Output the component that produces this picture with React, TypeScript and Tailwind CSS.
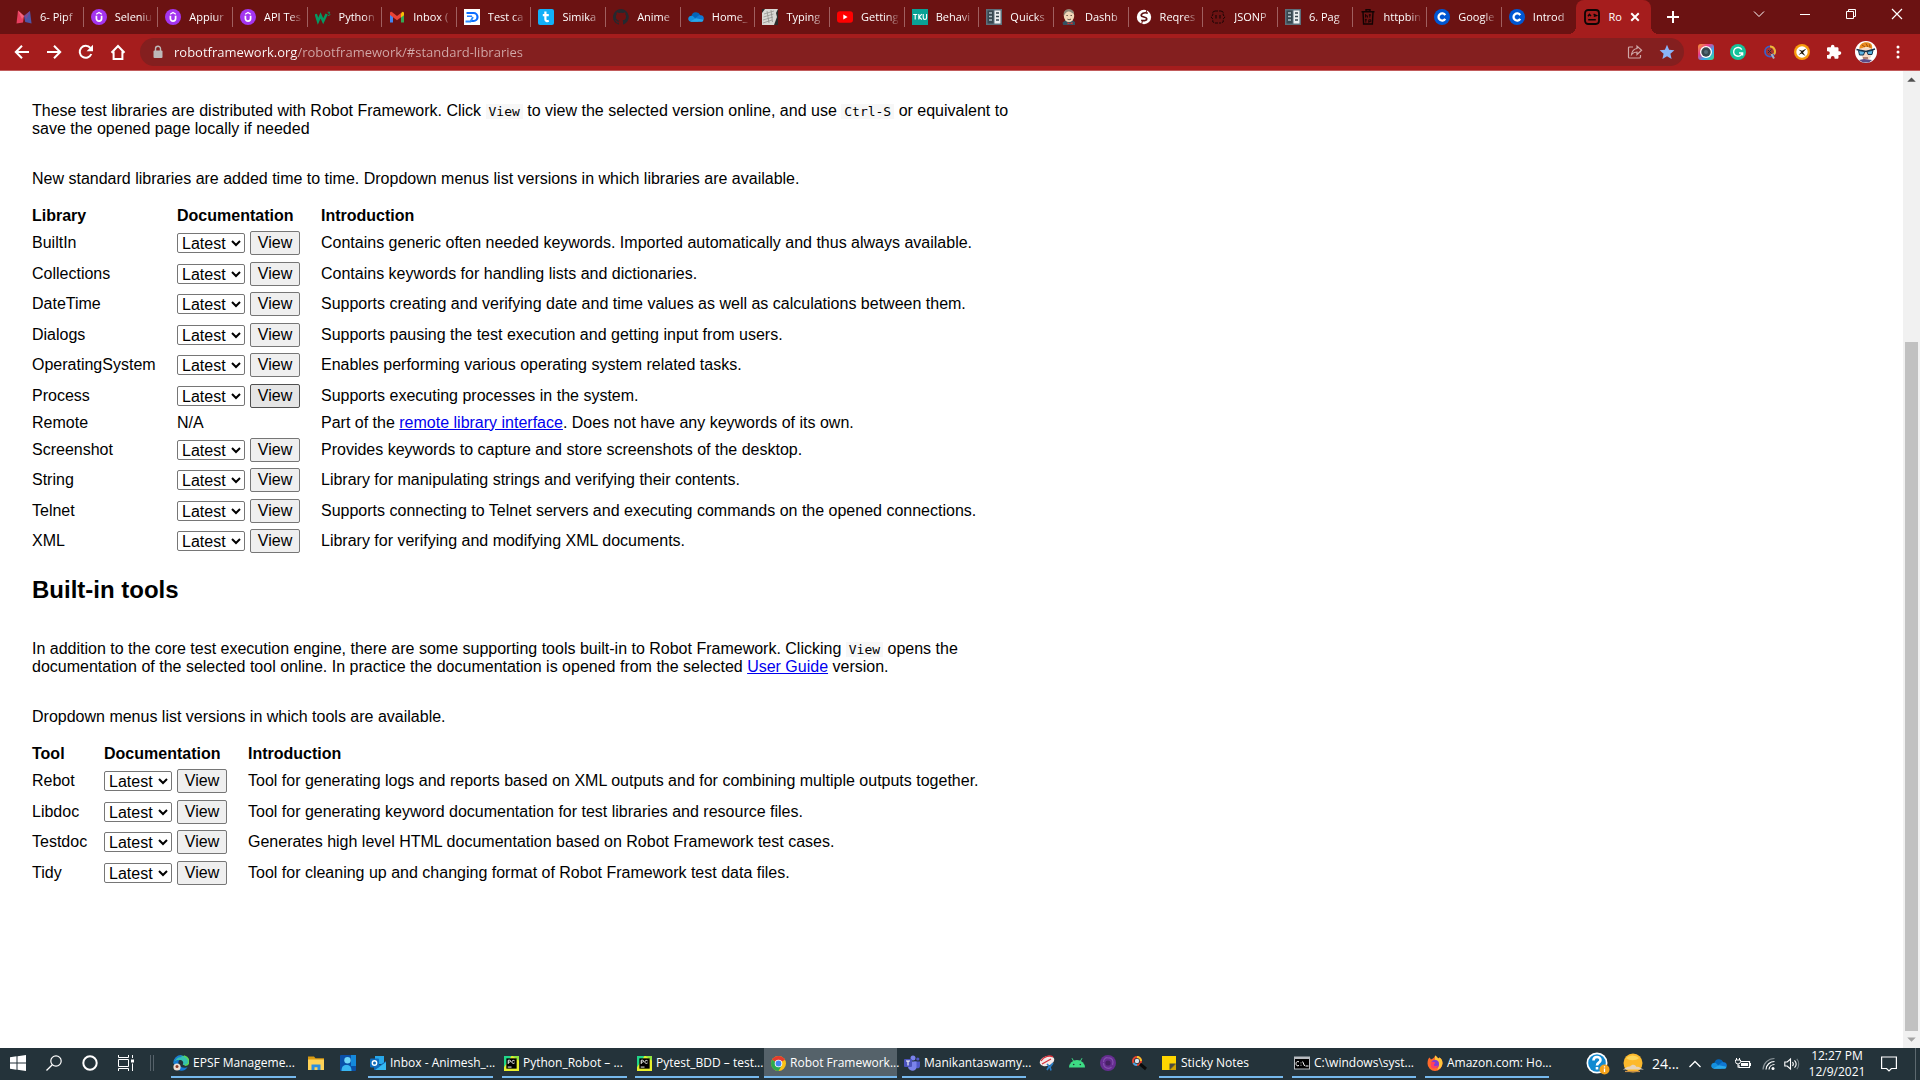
import type { ReactNode } from "react";

type IconProps = { children: ReactNode; className?: string; box?: string };

function Icon({ children, className = "size-4", box = "0 0 16 16" }: IconProps) {
  return (
    <svg viewBox={box} className={`${className} shrink-0`} fill="none" aria-hidden="true">
      {children}
    </svg>
  );
}

/* ---------- Tab icons ---------- */

const udemy = (
  <Icon>
    <circle cx="8" cy="8" r="8" fill="#a435f0" />
    <path d="M5.4 6.8v2.8a2.6 2.6 0 0 0 5.2 0V6.8" stroke="#fff" strokeWidth="1.7" />
    <path d="M5.2 5.2 8 3.4l2.8 1.8" stroke="#fff" strokeWidth="1.3" />
  </Icon>
);

const coursera = (
  <Icon>
    <circle cx="8" cy="8" r="8" fill="#0056d2" />
    <path d="M11.2 6.1A3.6 3.6 0 1 0 11.2 9.9" stroke="#fff" strokeWidth="2.3" />
  </Icon>
);

const bookPages = (
  <Icon>
    <rect width="16" height="16" fill="#5c6f7b" />
    <rect x="1.5" y="1.5" width="6" height="13" fill="#37474f" />
    <rect x="8.5" y="1.5" width="6" height="13" fill="#eceff1" />
    <path d="M3 4h3M3 7.5h3M3 11h3" stroke="#b0bec5" strokeWidth="1.6" />
    <path d="M10 4h3M10 7.5h3M10 11h3" stroke="#37474f" strokeWidth="1.6" />
  </Icon>
);

const cloud = (
  <Icon>
    <path d="M3.5 7a4.6 4.6 0 0 1 8.7-1l-4 4.5L2 11z" fill="#0364b8" />
    <path d="M.2 10.3A3.3 3.3 0 0 1 4.8 7l6 5.8H3a2.9 2.9 0 0 1-2.8-2.5z" fill="#1490df" />
    <path d="M7 9.2 11.3 6a3.9 3.9 0 0 1 1.6.3A3.4 3.4 0 0 1 15.8 10l-1.5 2.7L9 12z" fill="#0f78d4" />
    <path d="M2.2 12.6 8 9.2l7.6 1.6a2.6 2.6 0 0 1-2.3 2H3.4z" fill="#28a8ea" />
  </Icon>
);

const robot = (
  <Icon>
    <rect x="1" y="1" width="14" height="14" rx="3.2" stroke="#0b0505" strokeWidth="1.8" />
    <path d="M4 7.2 5.4 5.4 7 7M9.6 5.2l2.6 1.4-2.4.6M4.2 10.8h7.6" stroke="#0b0505" strokeWidth="1.5" />
  </Icon>
);

const tabs: { title: string; icon: ReactNode }[] = [
  {
    title: "6- Pipf",
    icon: (
      <Icon>
        <path d="M2 1.5 8 7l-1 6.5-6.5 1z" fill="#e83e5f" />
        <path d="M14 2 8 7l1.2 6 6.4 1.5z" fill="#4e55a5" />
        <path d="M2 1.5 8 7l-2 3z" fill="#f7647c" />
        <path d="M8 7 14 2l-3.4 8z" fill="#7a4a93" />
      </Icon>
    ),
  },
  { title: "Seleniu", icon: udemy },
  { title: "Appiur", icon: udemy },
  { title: "API Tes", icon: udemy },
  {
    title: "Python",
    icon: (
      <Icon>
        <path d="M.8 5 3 12.2 5.6 6.4 8.2 12.2 11.6 5" stroke="#059862" strokeWidth="2.5" />
        <path d="M12.6 3.2h2.2l-1 1.4c1.6 0 1.5 2.2-.9 1.9" stroke="#059862" strokeWidth="1" />
      </Icon>
    ),
  },
  {
    title: "Inbox (",
    icon: (
      <Icon>
        <path d="M1 4v9.5h3V7z" fill="#4285f4" />
        <path d="M15 4v9.5h-3V7z" fill="#34a853" />
        <path d="M12 4.2 13.2 3A1.2 1.2 0 0 1 15 4v2.2l-3 2.2z" fill="#fbbc04" />
        <path d="M1 4.2A1.2 1.2 0 0 1 2.9 3L8 7l4-3v4.3l-4 3-7-5.2z" fill="#ea4335" />
      </Icon>
    ),
  },
  {
    title: "Test ca",
    icon: (
      <Icon>
        <rect width="16" height="16" fill="#fff" />
        <path d="M2.5 4h7a4 4 0 0 1 0 8h-3" stroke="#0a6cff" strokeWidth="2.2" />
        <path d="M1.5 12.5h5L9 8" stroke="#2b8cff" strokeWidth="1.8" />
        <path d="M3 7.2h5" stroke="#0a6cff" strokeWidth="1.4" />
      </Icon>
    ),
  },
  {
    title: "Simika",
    icon: (
      <Icon>
        <rect width="16" height="16" rx="2" fill="#12b0f8" />
        <path d="M7.4 2.6v7.6c0 1.8 1.6 2.2 3.4 1.6M4.8 6.2h6" stroke="#fff" strokeWidth="2.2" />
      </Icon>
    ),
  },
  {
    title: "Anime",
    icon: (
      <Icon>
        <path
          fill="#24292f"
          d="M8 0a8 8 0 0 0-2.5 15.6c.4 0 .5-.2.5-.4v-1.5c-2.2.5-2.7-1-2.7-1-.4-.9-.9-1.2-.9-1.2-.7-.5.1-.5.1-.5.8.1 1.2.8 1.2.8.7 1.3 1.9.9 2.3.7.1-.5.3-.9.5-1.1-1.8-.2-3.6-.9-3.6-4 0-.9.3-1.6.8-2.1 0-.2-.4-1 .1-2.1 0 0 .7-.2 2.2.8a7.5 7.5 0 0 1 4 0c1.5-1 2.2-.8 2.2-.8.5 1.1.2 1.9.1 2.1.5.6.8 1.3.8 2.2 0 3-1.8 3.7-3.6 3.9.3.3.5.8.5 1.5v2.2c0 .2.1.5.5.4A8 8 0 0 0 8 0z"
        />
      </Icon>
    ),
  },
  { title: "Home_", icon: cloud },
  {
    title: "Typing",
    icon: (
      <Icon>
        <rect width="16" height="16" fill="#2a2a2a" />
        <path d="M3 0h13l-2 4 1 4-3 8H0V4z" fill="#d9d9d5" />
        <path d="M2 5l10-3M1.5 8l10-3M1 11l10-3M1 14l9-3M5 2l2 12M9 1l1.5 12" stroke="#8b8b87" strokeWidth=".7" />
      </Icon>
    ),
  },
  {
    title: "Getting",
    icon: (
      <Icon>
        <rect y="2.2" width="16" height="11.6" rx="3" fill="#f00" />
        <path d="M6.3 5.6v4.8L10.6 8z" fill="#fff" />
      </Icon>
    ),
  },
  {
    title: "Behavi",
    icon: (
      <Icon>
        <rect width="16" height="16" fill="#0aa195" />
        <path d="M1.2 5.5h4M3.2 5.5v5M6.8 5v5.5M9.8 5.2 7 8l2.8 2.5M11.2 5v3.8c0 2.2 3.4 2.2 3.4 0V5" stroke="#fff" strokeWidth="1.1" />
      </Icon>
    ),
  },
  { title: "Quicks", icon: bookPages },
  {
    title: "Dashb",
    icon: (
      <Icon>
        <path d="M1.5 13.5 5 11h6l3 2v3H2z" fill="#335061" />
        <ellipse cx="8" cy="6.8" rx="5.2" ry="6.3" fill="#f0d6b7" />
        <path d="M2.8 7C2 2 5 .2 8 .3c3 0 5 1.8 5 4.7-2-1-4-3-6.500-2.200C4.500 3.600 4 5 2.800 7z" fill="#8d8678" />
        <path d="M5.500 6.500h1.200M9.600 6.500h1.200M6.500 10.200c1.500.8 2.500.5 3.500-.2" stroke="#33271f" strokeWidth=".9" />
        <path d="M6.500 13.300 9 14.200l2.600-1.200v2.600L9 14.600l-2.500 1z" fill="#d33833" />
      </Icon>
    ),
  },
  {
    title: "Reqres",
    icon: (
      <Icon>
        <circle cx="8" cy="8" r="7.2" fill="#fff" />
        <path d="M11.800 4.200C8 3 4.800 4.600 5.200 6.600c.4 1.700 5.400 1.200 5.600 3.200.1 1.700-2.800 2.400-5.600 1.400" stroke="#5a1212" strokeWidth="1.700" />
        <path d="M11 .8 9.800 4M5.600 15.300 6.400 12" stroke="#6b1212" strokeWidth="1" />
      </Icon>
    ),
  },
  {
    title: "JSONP",
    icon: (
      <Icon>
        <path d="M5 2 2.800 3v3L1 8l1.800 2v3L5 14M11 2l2.200 1v3L15 8l-1.800 2v3L11 14M5 2h6M5 14h6" stroke="#1c0505" strokeWidth="1" strokeDasharray="3 1" />
        <path d="M6 6v3.500M10 6v3.500" stroke="#1c0505" strokeWidth="1.200" />
      </Icon>
    ),
  },
  { title: "6. Pag", icon: bookPages },
  {
    title: "httpbin",
    icon: (
      <Icon>
        <path d="M1.500 2.800h13M6 2.500V.8h4v1.700M3 3l.6 12h8.800L13 3" stroke="#120303" strokeWidth="1.400" />
        <path d="M5.600 5v3.600M5.600 6.800h1.800v1.800M9.800 5v3.600M8.800 6h2.200M5.800 9.800v3.800M4.900 10.800h2M8.800 13.800v-3h2v1.800h-2" stroke="#120303" strokeWidth=".9" />
      </Icon>
    ),
  },
  { title: "Google", icon: coursera },
  { title: "Introd", icon: coursera },
];

function TabStrip() {
  return (
    <header className="flex h-[34px] bg-[#6b1212] text-white">
      <div role="tablist" className="flex min-w-0 flex-1 pl-[9px]">
        {tabs.map((tab, i) => (
          <button
            key={i}
            role="tab"
            aria-selected="false"
            className={`my-[7px] flex min-w-0 flex-1 basis-0 items-center gap-2 pr-1 pl-[7px] text-left ${
              i < tabs.length - 1 ? "border-r border-[#a05f5f]" : "border-r border-transparent"
            }`}
          >
            {tab.icon}
            <span className="min-w-0 flex-1 text-[11px] leading-4 whitespace-nowrap [mask-image:linear-gradient(90deg,black_65%,transparent)]">
              {tab.title}
            </span>
          </button>
        ))}
        <div className="relative flex min-w-0 flex-1 basis-0 items-center rounded-t-lg bg-[#a51d1d] pr-1 pl-2">
          <span className="absolute bottom-0 -left-2 size-2 bg-[radial-gradient(circle_at_0_0,transparent_8px,#a51d1d_8px)]" />
          <span className="absolute -right-2 bottom-0 size-2 bg-[radial-gradient(circle_at_100%_0,transparent_8px,#a51d1d_8px)]" />
          <button role="tab" aria-selected="true" className="flex min-w-0 flex-1 items-center gap-2 text-left">
            {robot}
            <span className="w-4 text-[11px] leading-4 whitespace-nowrap">Ro</span>
          </button>
          <button aria-label="Close tab" className="mr-1.5">
            <Icon className="size-3">
              <path d="m3 3 10 10M13 3 3 13" stroke="#fff" strokeWidth="2.600" />
            </Icon>
          </button>
        </div>
      </div>
      <div className="flex w-[269px] justify-between pr-[15px] pl-[14px]">
        <button aria-label="New tab" className="self-center">
          <Icon>
            <path d="M8 2v12M2 8h12" stroke="#fff" strokeWidth="2" />
          </Icon>
        </button>
        <div className="flex h-7 items-center gap-[30px]">
          <button aria-label="Search tabs">
            <Icon>
              <path d="m3 5.500 5 5 5-5" stroke="#fff" />
            </Icon>
          </button>
          <button aria-label="Minimize">
            <Icon>
              <path d="M3 8.500h10" stroke="#fff" />
            </Icon>
          </button>
          <button aria-label="Restore">
            <Icon>
              <path d="M3.500 5.500h7v7h-7zM5.500 5.500v-2h7v7h-2" stroke="#fff" />
            </Icon>
          </button>
          <button aria-label="Close">
            <Icon>
              <path d="m3 3 10 10M13 3 3 13" stroke="#fff" strokeWidth="1.200" />
            </Icon>
          </button>
        </div>
      </div>
    </header>
  );
}

function Toolbar() {
  return (
    <nav className="flex h-[37px] items-center border-b border-[#c25c5c] bg-[#a51d1d] pr-[14px] pl-[14px]">
      <div className="flex items-center gap-4">
        <button aria-label="Back">
          <Icon>
            <path d="M15 8H2M8 1.800 1.800 8 8 14.200" stroke="#fff" strokeWidth="2" />
          </Icon>
        </button>
        <button aria-label="Forward">
          <Icon>
            <path d="M1 8h13M8 1.800 14.200 8 8 14.200" stroke="#fff" strokeWidth="2" />
          </Icon>
        </button>
        <button aria-label="Reload">
          <Icon>
            <path d="M13.300 10A6 6 0 1 1 12.400 4" stroke="#fff" strokeWidth="2" />
            <path d="M15 .8v6.400H8.600z" fill="#fff" />
          </Icon>
        </button>
        <button aria-label="Home">
          <Icon>
            <path d="M1.500 8.800 8 2l6.500 6.800M3.600 7.500V15h8.800V7.500" stroke="#fff" strokeWidth="2" />
          </Icon>
        </button>
      </div>
      <div className="ml-[14px] flex h-7 flex-1 items-center rounded-full bg-[#841f1f] pr-[9px] pl-2.5">
        <Icon>
          <rect x="3.500" y="6.500" width="9" height="7.500" rx="1" fill="#bdb9b9" />
          <path d="M5.500 7V4.700a2.500 2.500 0 0 1 5 0V7" stroke="#bdb9b9" strokeWidth="1.400" />
        </Icon>
        <input
          aria-label="Address"
          defaultValue="robotframework.org/robotframework/#standard-libraries"
          className="ml-2 min-w-0 flex-1 bg-[linear-gradient(90deg,#ffffff_124px,#d3a9a9_124px)] bg-clip-text text-[13px] leading-5 text-transparent outline-none"
        />
        <button aria-label="Share">
          <Icon>
            <path d="M6 3H2.500A1 1 0 0 0 1.500 4v9a1 1 0 0 0 1 1h10a1 1 0 0 0 1-1v-2" stroke="#cfa6a6" strokeWidth="1.200" />
            <path d="M10 2v2.500C6.500 5 5 7.500 4.600 10.500 6 8.700 7.500 8 10 8v2.500l4.600-4.300z" stroke="#cfa6a6" strokeWidth="1.200" />
          </Icon>
        </button>
        <button aria-label="Bookmark" className="ml-4">
          <Icon>
            <path d="m8 .8 2.100 5 5.300.4-4 3.500 1.200 5.200L8 12.200l-4.600 2.700 1.200-5.200-4-3.500 5.300-.4z" fill="#8ab4f8" />
          </Icon>
        </button>
      </div>
      <div className="ml-[14px] flex items-center gap-4">
        <button aria-label="Camera extension">
          <svg viewBox="0 0 16 16" className="size-4">
            <defs>
              <linearGradient id="cam" x1="0" y1="0" x2="1" y2="1">
                <stop offset="0" stopColor="#f6a02c" />
                <stop offset=".35" stopColor="#ec3b8b" />
                <stop offset=".65" stopColor="#35a7f0" />
                <stop offset="1" stopColor="#3ddc84" />
              </linearGradient>
            </defs>
            <rect width="16" height="16" rx="3" fill="url(#cam)" />
            <circle cx="8" cy="8" r="6" fill="#fff" />
            <circle cx="8" cy="8" r="4.700" fill="#36474f" />
            <circle cx="8" cy="8" r="2" fill="#546b78" />
          </svg>
        </button>
        <button aria-label="Grammar extension">
          <Icon>
            <circle cx="8" cy="8" r="8" fill="#15c39a" />
            <path d="M11.800 5.600A4.400 4.400 0 1 0 12.300 9M9 9h3.600v2.500" stroke="#fff" strokeWidth="1.400" />
          </Icon>
        </button>
        <button aria-label="Search extension">
          <Icon>
            <circle cx="8" cy="7.500" r="4.900" stroke="#3d5fc4" strokeWidth="2" />
            <circle cx="8" cy="7.500" r="3.900" fill="#a8322c" />
            <path d="M8 2.600a4.900 4.900 0 0 1 4 7.800" stroke="#f2b632" strokeWidth="2" />
            <path d="m9.500 10 2.500 4.500" stroke="#9fb2c4" strokeWidth="2" />
            <path d="m6 6 3.500 3.500M9.500 5.500 6 9" stroke="#2b2340" />
          </Icon>
        </button>
        <button aria-label="Picker extension">
          <Icon>
            <circle cx="8" cy="8" r="8" fill="#f79a0c" />
            <circle cx="8" cy="8" r="5.700" fill="#fff" />
            <path d="M4.500 5.500 8 6.800l4.500-2.300L9 8.500l2.500 3.500-4-2.500-3 1.500 2.800-3z" fill="#20180a" />
          </Icon>
        </button>
        <button aria-label="Extensions">
          <Icon>
            <path
              fill="#fff"
              d="M13.500 7.300h-1V4.600c0-.8-.6-1.300-1.300-1.300H8.500v-.8a1.800 1.800 0 0 0-3.600 0v.8H2.300C1.600 3.300 1 3.800 1 4.600v2.600h.9a1.900 1.900 0 0 1 0 3.800H1v2.500c0 .8.6 1.300 1.300 1.300h2.500v-.9a1.900 1.900 0 0 1 3.800 0v.9h2.600c.7 0 1.300-.5 1.300-1.300v-2.600h1a1.800 1.800 0 0 0 0-3.600z"
            />
          </Icon>
        </button>
        <button aria-label="Profile" className="-ml-[3px]">
          <Icon className="size-[22px]" box="0 0 22 22">
            <circle cx="11" cy="11" r="11" fill="#fff" />
            <path d="M6 7h11l-1 9-4 4-5-3z" fill="#f7d9c4" />
            <path d="M4.500 8C4 3 8 .8 12 1.200c4 .3 6 3 5 6.800-3-2-7-2.500-12.500 0z" fill="#e98a1f" />
            <path d="M7 4l3 2M11 2.500l2 3.500M14.500 3.500l.5 3" stroke="#9a4d10" />
            <path d="M1.500 8.500 11 10.500l9-2.500" stroke="#14324a" strokeWidth="1.300" />
            <path d="M3.500 9.500 9.800 10.500 8.500 14H4.500zM12 10.500l6-1.200-1 4.200h-4z" fill="#5db4e0" stroke="#14324a" />
            <path d="M8 17h5" stroke="#6b2c1e" />
            <path d="m4 19 5-1 8 1-3 2.500H8z" fill="#5b4a86" />
          </Icon>
        </button>
        <button aria-label="Menu" className="-ml-[3px]">
          <Icon>
            <g fill="#fff">
              <circle cx="8" cy="3" r="1.500" />
              <circle cx="8" cy="8" r="1.500" />
              <circle cx="8" cy="13" r="1.500" />
            </g>
          </Icon>
        </button>
      </div>
    </nav>
  );
}

/* ---------- Page ---------- */

type Row = { name: string; intro: ReactNode; na?: boolean; hovered?: boolean };

const libraries: Row[] = [
  { name: "BuiltIn", intro: "Contains generic often needed keywords. Imported automatically and thus always available." },
  { name: "Collections", intro: "Contains keywords for handling lists and dictionaries." },
  { name: "DateTime", intro: "Supports creating and verifying date and time values as well as calculations between them." },
  { name: "Dialogs", intro: "Supports pausing the test execution and getting input from users." },
  { name: "OperatingSystem", intro: "Enables performing various operating system related tasks." },
  { name: "Process", intro: "Supports executing processes in the system.", hovered: true },
  {
    name: "Remote",
    na: true,
    intro: (
      <>
        Part of the{" "}
        <a href="#remote" className="text-[#0000ee] underline">
          remote library interface
        </a>
        . Does not have any keywords of its own.
      </>
    ),
  },
  { name: "Screenshot", intro: "Provides keywords to capture and store screenshots of the desktop." },
  { name: "String", intro: "Library for manipulating strings and verifying their contents." },
  { name: "Telnet", intro: "Supports connecting to Telnet servers and executing commands on the opened connections." },
  { name: "XML", intro: "Library for verifying and modifying XML documents." },
];

const tools: Row[] = [
  { name: "Rebot", intro: "Tool for generating logs and reports based on XML outputs and for combining multiple outputs together." },
  { name: "Libdoc", intro: "Tool for generating keyword documentation for test libraries and resource files." },
  { name: "Testdoc", intro: "Generates high level HTML documentation based on Robot Framework test cases." },
  { name: "Tidy", intro: "Tool for cleaning up and changing format of Robot Framework test data files." },
];

function DocTable({ label, rows, firstCol }: { label: string; rows: Row[]; firstCol: string }) {
  return (
    <table className="border-collapse text-left">
      <thead>
        <tr className="h-6">
          <th className={`${firstCol} p-0 font-bold`}>{label}</th>
          <th className="w-36 p-0 font-bold">Documentation</th>
          <th className="p-0 font-bold">Introduction</th>
        </tr>
      </thead>
      <tbody>
        {rows.map((row) => (
          <tr key={row.name} className={row.na ? "h-[23px]" : "h-[30px] even:h-[31px]"}>
            <td className="p-0">{row.name}</td>
            <td className="p-0">
              {row.na ? (
                "N/A"
              ) : (
                <div className="flex items-center gap-[5px]">
                  <select
                    aria-label={`${row.name} version`}
                    className="h-5 w-[68px] rounded-[2px] border border-[#767676] bg-white text-base leading-[18px]"
                  >
                    <option>Latest</option>
                  </select>
                  <button
                    className={`h-6 w-[50px] rounded-[2px] border leading-5 ${
                      row.hovered ? "border-[#4f4f4f] bg-[#e5e5e5]" : "border-[#767676] bg-[#efefef]"
                    }`}
                  >
                    View
                  </button>
                </div>
              )}
            </td>
            <td className="p-0">{row.intro}</td>
          </tr>
        ))}
      </tbody>
    </table>
  );
}

function Code({ children }: { children: ReactNode }) {
  return (
    <code className="bg-[#f7f7f7] px-[3px] font-['DejaVu_Sans_Mono',monospace] text-[13px] leading-4">{children}</code>
  );
}

function Page() {
  return (
    <main className="min-w-0 flex-1 overflow-hidden bg-white px-8 pt-[31px] font-['Liberation_Sans',Arial,sans-serif] text-base leading-[18px] text-black">
      <p className="max-w-[1000px]">
        These test libraries are distributed with Robot Framework. Click <Code>View</Code> to view the selected version
        online, and use <Code>Ctrl-S</Code> or equivalent to save the opened page locally if needed
      </p>
      <p className="mt-8 mb-4">
        New standard libraries are added time to time. Dropdown menus list versions in which libraries are available.
      </p>
      <DocTable label="Library" rows={libraries} firstCol="w-[145px]" />
      <h2 className="mt-5 mb-9 text-2xl leading-7 font-bold">Built-in tools</h2>
      <p className="max-w-[1000px]">
        In addition to the core test execution engine, there are some supporting tools built-in to Robot Framework.
        Clicking <Code>View</Code> opens the documentation of the selected tool online. In practice the documentation is
        opened from the selected{" "}
        <a href="#user-guide" className="text-[#0000ee] underline">
          User Guide
        </a>{" "}
        version.
      </p>
      <p className="mt-8 mb-4">Dropdown menus list versions in which tools are available.</p>
      <DocTable label="Tool" rows={tools} firstCol="w-[72px]" />
    </main>
  );
}

function Scrollbar() {
  return (
    <div className="flex w-[17px] shrink-0 flex-col items-center bg-[#f1f1f1]">
      <Icon className="h-[17px] w-[17px]">
        <path d="M4 10h8L8 6z" fill="#505050" />
      </Icon>
      <div className="grow-[254]" />
      <div className="w-[13px] grow-[689] bg-[#c1c1c1]" />
      <Icon className="h-[17px] w-[17px]">
        <path d="M4 6h8l-4 4z" fill="#a3a3a3" />
      </Icon>
    </div>
  );
}

/* ---------- Taskbar ---------- */

const pycharm = (
  <Icon className="size-[15px]">
    <rect width="16" height="16" fill="#e8ef2c" />
    <path d="M0 0h8L0 12z" fill="#21d789" />
    <path d="M9 0h7v5z" fill="#8ee53f" />
    <rect x="2.500" y="2.500" width="11" height="11" fill="#000" />
    <path d="M4.500 8.500v-4H6c1.400 0 1.400 2 0 2H4.500M11.300 5.200c-2-1.400-3.300.4-2.800 1.800.4 1 1.800 1.200 2.800.4M4 11.800h4" stroke="#fff" strokeWidth="1" />
  </Icon>
);

function Task({ icon, label, className, active }: { icon: ReactNode; label: string; className: string; active?: boolean }) {
  return (
    <button
      className={`flex h-[30px] items-center gap-1 border-b-2 border-[#76b9ed] pt-0.5 text-left ${className} ${
        active ? "bg-[#55626a] pl-[7px]" : "pl-0.5"
      }`}
    >
      {icon}
      <span className="min-w-0 flex-1 whitespace-nowrap">{label}</span>
    </button>
  );
}

function Launcher({ name, className, children }: { name: string; className: string; children: ReactNode }) {
  return (
    <button aria-label={name} className={className}>
      <Icon>{children}</Icon>
    </button>
  );
}

function Taskbar() {
  return (
    <footer className="flex h-8 items-start justify-between bg-[#24333a] text-[12px] leading-4 text-white">
      <div className="flex h-[30px] items-center">
        <Launcher name="Start" className="ml-2.5">
          <path d="M0 2.200 6.500 1.300v6.200H0zM7.500 1.200 16 0v7.500H7.500zM0 8.500h6.500v6.200L0 13.800zM7.500 8.500H16V16l-8.500-1.200z" fill="#fff" />
        </Launcher>
        <Launcher name="Search" className="ml-5">
          <circle cx="10" cy="6" r="5.200" stroke="#fff" strokeWidth="1.200" />
          <path d="M6.300 9.700.5 15.500" stroke="#fff" strokeWidth="1.300" />
        </Launcher>
        <Launcher name="Cortana" className="ml-5">
          <circle cx="8" cy="8" r="6.700" stroke="#fff" strokeWidth="2" />
        </Launcher>
        <Launcher name="Task view" className="ml-5">
          <path d="M.5 0v2.500h10V0M.5 16v-2.500h10V16M.5 4.500h10v7H.5zM14.500 0v3M14.500 8.500V16" stroke="#fff" />
          <rect x="13" y="4.500" width="3" height="3" fill="#fff" />
        </Launcher>
        <span className="mr-[17px] ml-4 h-4 w-1 border-x border-[#56626a]" />
        <Task
          className="w-[125px]"
          label="EPSF Manageme..."
          icon={
            <Icon>
              <path d="M1 9C.5 4 4 .5 8.500.5c4.500 0 7.300 3.200 7.200 6 0 2.500-2 3.800-4 3.800-1.800 0-2.200-.8-1.700-1.500C11 7 9 4.500 6 5 3.500 5.300 1.500 7 1 9z" fill="#35c1b1" />
              <path d="M1 9c.5-3 3-4.500 5.500-4C4 7 5.500 13 12 12.800c1 0 2-.3 2.600-.7C12.500 16 9 16 7 15.500 3 14.800.8 12 1 9z" fill="#1478d4" />
              <path d="M1 8.500C1 4 4 1 8.500 1" stroke="#1b7fd0" strokeWidth="1.800" />
              <path d="M11 1c3 1 4.800 3.500 4.700 5.800 0 2-1.500 3.400-4 3.400" stroke="#5bd75b" strokeWidth="1.500" />
              <circle cx="4" cy="12" r="3.600" fill="#f0ded5" />
              <circle cx="4" cy="11.500" r="1.500" fill="#8c3b2a" />
            </Icon>
          }
        />
        <Launcher name="File Explorer" className="ml-3">
          <path d="M0 1.500h6l1.500 1.800H16V14H0z" fill="#d99b12" />
          <path d="M0 4.500h16V15H0z" fill="#ffd358" />
          <path d="M3.500 9.500h9V15h-3v-2.800h-3V15h-3z" fill="#2d8fe0" />
        </Launcher>
        <Launcher name="People" className="mr-3 ml-4">
          <rect width="16" height="16" rx="1" fill="#0a50a8" />
          <path d="M11 0h5v11h-5z" fill="#1489dc" />
          <circle cx="7.500" cy="5.200" r="3.200" fill="#70d6f8" />
          <path d="M1.500 16c0-4.500 2-6 5-6s5 1.500 5 6z" fill="#38b6f1" />
        </Launcher>
        <Task
          className="w-[125px]"
          label="Inbox - Animesh_..."
          icon={
            <Icon>
              <path d="M5 1h9v8H5z" fill="#28a8ea" />
              <path d="M4 6l6 4 6-4v9H4z" fill="#1066b5" />
              <path d="M16 7v8H5z" fill="#35b8f1" />
              <rect y="3.500" width="9" height="9" rx="1" fill="#0f6cbd" />
              <circle cx="4.500" cy="8" r="2.200" stroke="#fff" strokeWidth="1.400" />
            </Icon>
          }
        />
        <Task className="ml-[9px] w-[125px]" label="Python_Robot – ..." icon={pycharm} />
        <Task className="ml-2 w-[124px]" label="Pytest_BDD – test..." icon={pycharm} />
        <Task
          active
          className="ml-[5px] w-[133px]"
          label="Robot Framework..."
          icon={
            <Icon className="size-[15px]">
              <circle cx="8" cy="8" r="8" fill="#fbc116" />
              <path d="M8 8 1.100 4A8 8 0 0 1 14.900 4z" fill="#e33b2e" />
              <path d="M8 8 1.100 4A8 8 0 0 0 8 16l3.500-6z" fill="#2da94f" />
              <circle cx="8" cy="8" r="4" fill="#fff" />
              <circle cx="8" cy="8" r="3.100" fill="#4285f4" />
            </Icon>
          }
        />
        <Task
          className="ml-[5px] w-[124px]"
          label="Manikantaswamy..."
          icon={
            <Icon>
              <circle cx="9" cy="3" r="2.500" fill="#7b83eb" />
              <circle cx="13.800" cy="4" r="1.600" fill="#5059c9" />
              <path d="M10 6.500h6v4.500c0 2.500-3 3-4.500 1.500z" fill="#5059c9" />
              <path d="M4 6.500h8.500V12c0 5-7.500 5-8.500 0z" fill="#7b83eb" />
              <rect y="4" width="8" height="8" rx="1" fill="#4b53bc" />
              <path d="M2 6h4M4 6v4.500" stroke="#fff" strokeWidth="1.100" />
            </Icon>
          }
        />
        <Launcher name="Snipping Tool" className="ml-[13px]">
          <ellipse cx="8" cy="6" rx="7.500" ry="4.800" fill="#f3e9e9" transform="rotate(-20 8 6)" />
          <path d="M2 6c3-5 9-6 12-4M3 9l9-5" stroke="#d6313b" strokeWidth="1.300" />
          <path d="m8 9 3 3 3-4M10.500 11 8 15M11 12l1 3.500" stroke="#2a7fcb" strokeWidth="1.600" />
        </Launcher>
        <Launcher name="Android" className="ml-3.5">
          <path d="M0 12.500a8 7.500 0 0 1 16 0z" fill="#3ddc84" />
          <path d="M4.500 6 3 3.200M11.500 6 13 3.200" stroke="#3ddc84" />
          <circle cx="4.700" cy="9.500" r=".8" fill="#24333a" />
          <circle cx="11.300" cy="9.500" r=".8" fill="#24333a" />
        </Launcher>
        <Launcher name="Appium" className="ml-[15px]">
          <circle cx="8" cy="8" r="8" fill="#662d91" />
          <circle cx="8" cy="8" r="2.600" fill="#452163" />
          <path d="M8 3c4-1 6 3 4.500 7M11.500 12c-3.500 3-8 .5-8-4M3.500 7C3.500 4 6 2 8 3" stroke="#8350ad" strokeWidth="1.200" />
        </Launcher>
        <Launcher name="Inspector" className="mr-3 ml-[15px]">
          <circle cx="6" cy="6" r="4" stroke="#e7442e" strokeWidth="2" />
          <path d="M6 2a4 4 0 0 1 4 4" stroke="#f6c52e" strokeWidth="2" />
          <path d="M2.500 8A4 4 0 0 0 6 10" stroke="#3fa7e6" strokeWidth="2" />
          <circle cx="6" cy="6" r="2.200" fill="#d8e6ee" />
          <path d="m9 9 6 5" stroke="#0b0b0b" strokeWidth="3" />
        </Launcher>
        <Task
          className="w-[124px]"
          label="Sticky Notes"
          icon={
            <Icon>
              <path d="M1 1h14v8l-6 6H1z" fill="#ffd500" />
              <path d="M15 9v6H9z" fill="#d2a200" />
              <path d="M8.500 15V8.500H15z" fill="#4b4a3e" />
            </Icon>
          }
        />
        <Task
          className="ml-[9px] w-[124px]"
          label="C:\windows\syst..."
          icon={
            <Icon>
              <path d="M0 1.500h16v13H0z" fill="#b8bcc0" />
              <path d="M1 4h14v9.500H1z" fill="#000" />
              <path d="M5 6.800c-2-.8-3 .3-3 1.900s1 2.600 3 1.800M7 7.500v.8M7 9.800v.8M8.600 6.500l2 4.500M11.500 11h3" stroke="#fff" strokeWidth="1" />
            </Icon>
          }
        />
        <Task
          className="ml-[9px] w-[124px]"
          label="Amazon.com: Ho..."
          icon={
            <Icon>
              <path d="M8 16a7.500 7.500 0 0 1-7.500-7.500C.5 5 1.500 3.500 2.500 2.500L4 4.500c1-.8 3.500-1 4-4 2 1 2.500 2.500 3.500 3l1-1C15 4 15.600 6.500 15.500 8.500A7.500 7.500 0 0 1 8 16z" fill="#ff6a2b" />
              <path d="M8 .5c2 1 2.500 2.500 3.500 3l1-1C15 4 15.600 6.500 15.500 8.500 15 12 13 14 10 15c3-4 2-9-2-10.500z" fill="#ffc53a" />
              <circle cx="8" cy="9" r="4" fill="#7a3ed8" />
              <path d="M4 7c2-1 3 .5 4.500.3C8 9 6.500 9 7 10.500c1 1 3 .5 4-.5-.5 3-3.500 4.500-6 3C3.500 11.500 3.500 9 4 7z" fill="#ff3f5e" />
            </Icon>
          }
        />
      </div>
      <div className="flex h-8 shrink-0 items-center">
        <button aria-label="Help">
          <Icon className="size-6" box="0 0 24 24">
            <circle cx="11" cy="11" r="10.500" fill="#fff" />
            <circle cx="11" cy="11" r="8.800" fill="#118ad1" />
            <path d="M7.500 8.500c0-4.500 7-4.500 7-.5 0 2.800-3.500 2.500-3.500 5.500M11 15v2.600" stroke="#fff" strokeWidth="2.600" />
            <circle cx="18.500" cy="17.500" r="5" fill="#f3a21b" />
            <path d="M18.500 16.500V20M18.500 14.200v1.200" stroke="#fff" strokeWidth="1.300" />
          </Icon>
        </button>
        <button className="ml-3 flex items-center gap-2">
          <Icon className="size-[22px]" box="0 0 22 22">
            <circle cx="11" cy="10" r="9.500" fill="#fcb92c" />
            <path d="M4 5a9.500 9.500 0 0 1 13 0C14 8 7 8 4 5z" fill="#fdd65a" />
            <path d="M0 16.500c3 0 4-3.500 8-3 2-3 6-2 6.500.5C17 13 19 16 22 16.500z" fill="#e6d3b8" />
            <path d="M3 18.500h15" stroke="#c78f4b" strokeWidth="1.200" />
          </Icon>
          <span className="text-[14px]">24...</span>
        </button>
        <button aria-label="Show hidden icons" className="ml-2">
          <Icon>
            <path d="m2.500 11 5.500-5.500 5.500 5.500" stroke="#fff" strokeWidth="1.300" />
          </Icon>
        </button>
        <button aria-label="OneDrive" className="ml-2">
          {cloud}
        </button>
        <Launcher name="Battery" className="ml-2">
          <path d="M6 5.500h8.500v6H4V9" stroke="#fff" strokeWidth="1.200" />
          <rect x="6" y="7" width="7" height="3" fill="#fff" />
          <path d="M15.500 7v3" stroke="#fff" />
          <path d="M1.500 2v2M4.500 2v2M.5 4h5v1.500a2.500 2.500 0 0 1-5 0zM3 8v3.500" stroke="#fff" />
        </Launcher>
        <Launcher name="Network" className="ml-2.5">
          <path d="M2 13.500A11.500 11.500 0 0 1 13.500 2.500" stroke="#8b959a" strokeWidth="1.200" />
          <path d="M5 13.500A8.500 8.500 0 0 1 13.500 5.500M8 13.500A5.500 5.500 0 0 1 13.500 8.500" stroke="#fff" strokeWidth="1.200" />
          <circle cx="12" cy="12.500" r="1.500" fill="#fff" />
        </Launcher>
        <Launcher name="Volume" className="ml-[7px]">
          <path d="M.8 6h2.400L6.500 3v10L3.200 10H.8z" stroke="#fff" strokeWidth="1.100" />
          <path d="M8.500 6c1 1.200 1 2.800 0 4M10.500 4.300c2 2.200 2 5.200 0 7.400" stroke="#fff" strokeWidth="1.100" />
          <path d="M12.800 2.800c2.600 3 2.600 7.400 0 10.400" stroke="#77838a" strokeWidth="1.100" />
        </Launcher>
        <div className="ml-[7px] w-[60px] text-center">
          <div>12:27 PM</div>
          <div>12/9/2021</div>
        </div>
        <Launcher name="Notifications" className="ml-3.5">
          <path d="M.6 1h14.800v11.500h-5L8 15l-2.400-2.500h-5z" stroke="#fff" strokeWidth="1.200" />
        </Launcher>
        <span className="mr-1 ml-[18px] h-8 w-px bg-[#5d696f]" />
      </div>
    </footer>
  );
}

export default function App() {
  return (
    <div className="flex h-screen flex-col overflow-hidden font-['Open_Sans','Noto_Sans',sans-serif]">
      <TabStrip />
      <Toolbar />
      <div className="flex min-h-0 flex-1">
        <Page />
        <Scrollbar />
      </div>
      <Taskbar />
    </div>
  );
}
